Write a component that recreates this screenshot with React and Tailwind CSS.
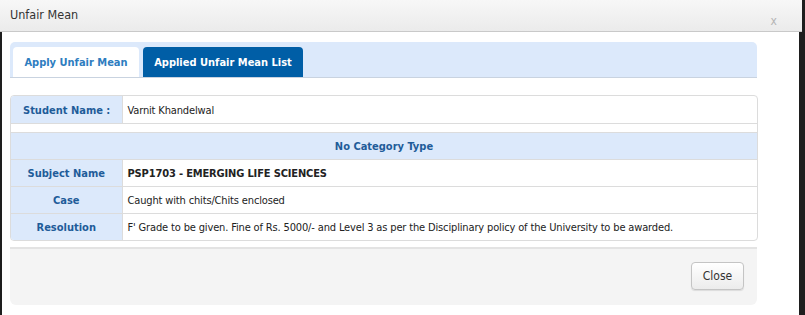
import { useState } from 'react';

const font = "font-['Tahoma','DejaVu_Sans_Condensed','DejaVu_Sans',sans-serif]";

const rows = [
  { label: 'Subject Name', value: 'PSP1703 - EMERGING LIFE SCIENCES', bold: true },
  { label: 'Case', value: 'Caught with chits/Chits enclosed' },
  {
    label: 'Resolution',
    value:
      "F' Grade to be given. Fine of Rs. 5000/- and Level 3 as per the Disciplinary policy of the University to be awarded.",
  },
];

export default function App() {
  const [tab, setTab] = useState(1);

  return (
    <div className={`flex h-[315px] w-[805px] flex-col overflow-hidden bg-[#1e1e1e] ${font}`}>
      <div className="flex h-[32px] w-[802px] shrink-0 items-start justify-between border-b border-[#c9c9c9] bg-gradient-to-b from-[#f7f7f7] to-[#ebebeb] pl-[10px] pr-[25px]">
        <span className="mt-[6px] text-[12.5px] text-[#333]">Unfair Mean</span>
        <span className="mt-[12px] text-[12px] text-[#b5b5b5]">x</span>
      </div>

      <div className="ml-[2px] w-[797px] flex-1 bg-white pl-[8px] pt-[10px]">
        <div className="flex h-[36px] w-[747px] items-end gap-[4px] rounded-t-[5px] border-b border-[#c9d3e0] bg-[#dce9fb] pl-[3px]">
          <button
            onClick={() => setTab(0)}
            className={`h-[30px] w-[126px] rounded-t-[4px] pt-[2px] text-[11px] font-bold ${
              tab === 0 ? 'bg-[#005ea6] text-white' : 'bg-white text-[#2e7dbf]'
            }`}
          >
            Apply Unfair Mean
          </button>
          <button
            onClick={() => setTab(1)}
            className={`h-[30px] w-[160px] rounded-t-[4px] pt-[2px] text-[11px] font-bold ${
              tab === 1 ? 'bg-[#005ea6] text-white' : 'bg-white text-[#2e7dbf]'
            }`}
          >
            Applied Unfair Mean List
          </button>
        </div>

        <div className="mt-[17px] w-[748px] overflow-hidden rounded-[4px] border border-[#dcdcdc]">
          <table className="w-full border-collapse text-[11px] tracking-[-0.15px]">
            <tbody>
              <tr className="h-[27px] border-b border-[#dcdcdc]">
                <td className="w-[111px] border-r border-[#dcdcdc] bg-[#dce9fb] pl-[12px] pt-[3px] font-bold tracking-normal text-[#1f5c99]">
                  Student Name :
                </td>
                <td className="pl-[5px] pt-[3px] text-[#222]">Varnit Khandelwal</td>
              </tr>
              <tr className="h-[9px] border-b border-[#dcdcdc]">
                <td colSpan={2}></td>
              </tr>
              <tr className="h-[27px] border-b border-[#dcdcdc] bg-[#dce9fb]">
                <td colSpan={2} className="pt-[3px] text-center font-bold tracking-normal text-[#1f5c99]">
                  No Category Type
                </td>
              </tr>
              {rows.map((r, i) => (
                <tr
                  key={r.label}
                  className={`h-[27px] ${i < rows.length - 1 ? 'border-b border-[#dcdcdc]' : ''}`}
                >
                  <td className="w-[111px] border-r border-[#dcdcdc] bg-[#dce9fb] pt-[3px] text-center font-bold tracking-normal text-[#1f5c99]">
                    {r.label}
                  </td>
                  <td className={`pl-[5px] pt-[3px] text-[#222] ${r.bold ? 'font-bold' : ''}`}>{r.value}</td>
                </tr>
              ))}
            </tbody>
          </table>
        </div>

        <div className="mt-[6px] flex h-[58px] w-[747px] items-center justify-end rounded-b-[6px] border-t-2 border-[#e3e3e3] bg-[#f4f4f4] pr-[13px]">
          <button className="mb-[2px] h-[28px] w-[53px] rounded-[4px] border border-[#c4c4c4] bg-gradient-to-b from-white to-[#ececec] text-[12px] text-[#333] shadow-[0_1px_1px_rgba(0,0,0,0.1)]">
            Close
          </button>
        </div>
      </div>
    </div>
  );
}
